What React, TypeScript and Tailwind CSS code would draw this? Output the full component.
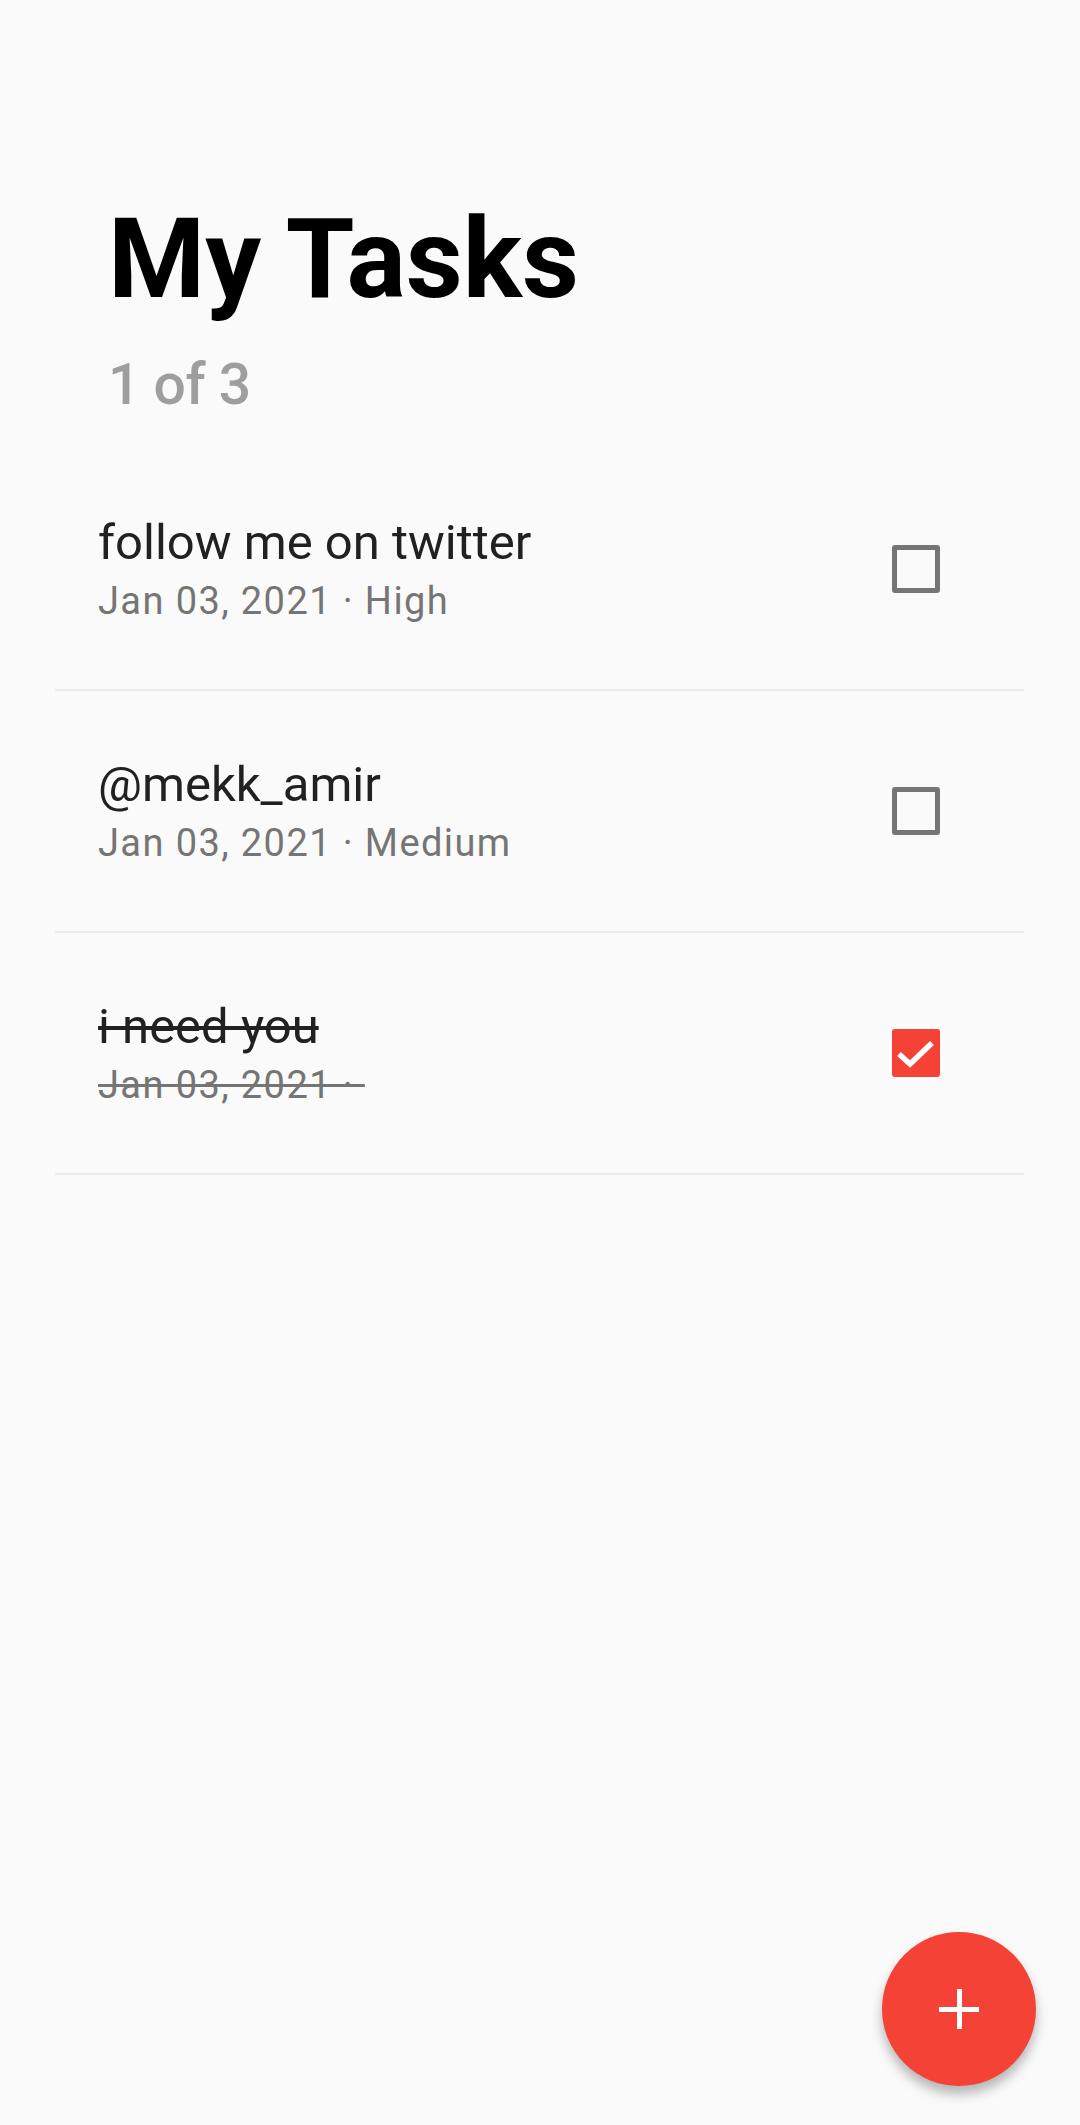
import React from "react";

type Task = { title: string; meta: string; done: boolean };

const tasks: Task[] = [
  { title: "follow me on twitter", meta: "Jan 03, 2021 · High", done: false },
  { title: "@mekk_amir", meta: "Jan 03, 2021 · Medium", done: false },
  { title: "i need you", meta: "Jan 03, 2021 · ", done: true },
];

function Checkbox({ checked }: { checked: boolean }) {
  if (checked) {
    return (
      <div className="w-[48px] h-[48px] rounded-[3px] bg-[#f44336] flex items-center justify-center">
        <svg width="48" height="48" viewBox="0 0 48 48">
          <polyline
            points="7,25 18,35 40,14"
            fill="none"
            stroke="#ffffff"
            strokeWidth="5.5"
            strokeLinecap="butt"
            strokeLinejoin="miter"
          />
        </svg>
      </div>
    );
  }
  return <div className="w-[48px] h-[48px] rounded-[3px] border-[5px] border-[#757575]" />;
}

export default function App() {
  return (
    <div
      className="relative min-h-[2125px] w-full bg-[#fafafa]"
      style={{ fontFamily: "Roboto, 'Noto Sans', sans-serif" }}
    >
      <div className="pt-[204px] pl-[108px]">
        <h1 className="text-[111px] leading-[111px] font-bold text-black">My Tasks</h1>
        <div className="mt-[41px] text-[57px] leading-[57px] font-medium tracking-[-0.5px] text-[#9e9e9e]">
          1 of 3
        </div>
      </div>

      <div className="mt-[36px] ml-[55px] mr-[56px]">
        {tasks.map((t, i) => (
          <div
            key={i}
            className="h-[242px] border-b-2 border-[#ebebeb] flex items-center pl-[43px] pr-[84px]"
          >
            <div className="flex-1 pb-[2px]">
              <div
                className={`text-[49px] leading-[58px] text-[#212121] ${t.done ? "line-through" : ""}`}
              >
                {t.title}
              </div>
              <div
                className={`mt-[7px] text-[38px] leading-[44px] tracking-[1.4px] text-[#757575] whitespace-pre ${t.done ? "line-through" : ""}`}
              >
                {t.meta}
              </div>
            </div>
            <Checkbox checked={t.done} />
          </div>
        ))}
      </div>

      <button className="absolute left-[882px] top-[1932px] w-[154px] h-[154px] rounded-full bg-[#f44336] shadow-[0_8px_12px_rgba(0,0,0,0.28)] flex items-center justify-center">
        <div className="relative w-[40px] h-[40px]">
          <div className="absolute left-[17.5px] top-0 w-[5px] h-[40px] bg-white" />
          <div className="absolute top-[17.5px] left-0 h-[5px] w-[40px] bg-white" />
        </div>
      </button>
    </div>
  );
}
